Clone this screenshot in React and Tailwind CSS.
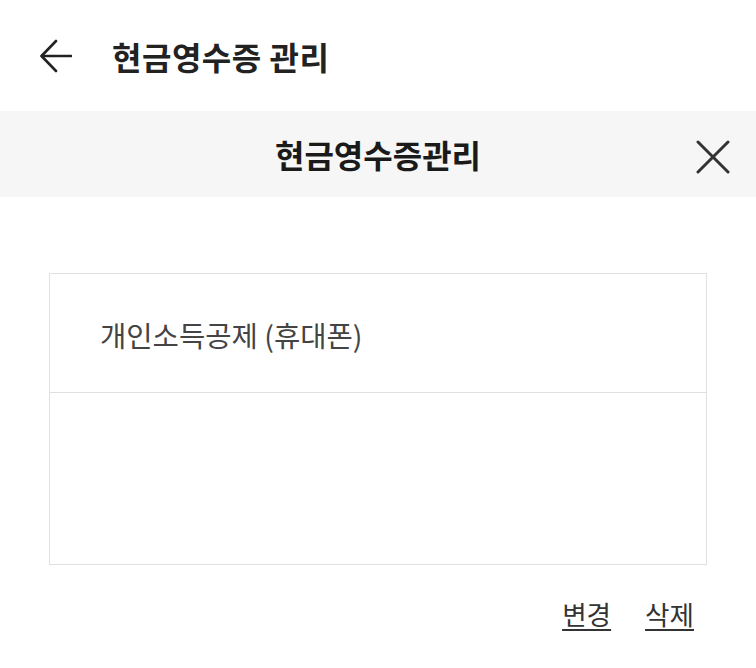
export default function App() {
  const font = { fontFamily: '"Noto Sans CJK KR", "Noto Sans", sans-serif' };
  return (
    <div className="w-[756px] h-[668px] bg-white overflow-hidden" style={font}>
      <header className="h-[111px] flex items-center pl-[40px]">
        <svg width="32" height="34" viewBox="0 0 32 34" fill="none" stroke="#222" strokeWidth="2.6" strokeLinecap="round" strokeLinejoin="round">
          <path d="M31 17H2" />
          <path d="M16 2L1.5 17L16 32" />
        </svg>
        <h1 className="ml-[40px] text-[32px] font-bold text-[#222] leading-none tracking-[0.5px]">현금영수증 관리</h1>
      </header>
      <div className="h-[86px] bg-[#f6f6f6] relative flex items-center justify-center">
        <h2 className="text-[32px] font-bold text-[#1a1a1a] leading-none">현금영수증관리</h2>
        <button className="absolute right-[26px] top-[29px] w-[34px] h-[34px]">
          <svg width="34" height="34" viewBox="0 0 34 34" stroke="#333" strokeWidth="3" strokeLinecap="round">
            <path d="M2 2L32 32" />
            <path d="M32 2L2 32" />
          </svg>
        </button>
      </div>
      <div className="pt-[76px] px-[49px]">
        <div className="border border-[#e0e0e0]">
          <div className="h-[119px] flex items-center pl-[50px] pt-[4px] border-b border-[#e0e0e0]">
            <span className="text-[28.6px] text-[#444] leading-none">개인소득공제 (휴대폰)</span>
          </div>
          <div className="h-[171px]"></div>
        </div>
        <div className="flex justify-end gap-[34px] pr-[13px] pt-[36px]">
          <a className="text-[26.6px] text-[#333] underline underline-offset-[4px] decoration-[1.5px] leading-none">변경</a>
          <a className="text-[26.6px] text-[#333] underline underline-offset-[4px] decoration-[1.5px] leading-none">삭제</a>
        </div>
      </div>
    </div>
  );
}
